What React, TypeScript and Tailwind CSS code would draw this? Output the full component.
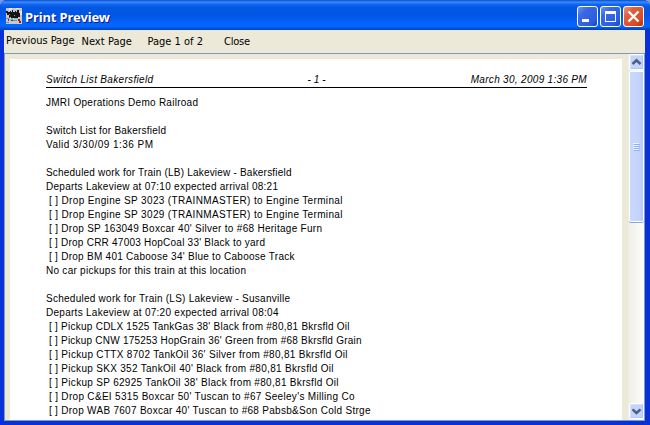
import React, { useLayoutEffect, useRef, useState } from 'react';

function FitText({ text, width, className = '' }: { text: string; width: number; className?: string }) {
  const ref = useRef<HTMLSpanElement>(null);
  const [spacing, setSpacing] = useState(0);
  useLayoutEffect(() => {
    if (ref.current) {
      const natural = ref.current.getBoundingClientRect().width;
      setSpacing((width - natural) / (text.length - 1));
    }
  }, [text, width]);
  return (
    <span ref={ref} className={`inline-block whitespace-pre ${className}`} style={{ letterSpacing: `${spacing}px` }}>
      {text}
    </span>
  );
}

const lines: [string, number][] = [
  ['JMRI Operations Demo Railroad', 152],
  ['', 0],
  ['Switch List for Bakersfield', 120],
  ['Valid 3/30/09 1:36 PM', 107],
  ['', 0],
  ['Scheduled work for Train (LB) Lakeview - Bakersfield', 245.5],
  ['Departs Lakeview at 07:10 expected arrival 08:21', 232],
  ['[ ] Drop Engine SP 3023 (TRAINMASTER) to Engine Terminal', 293.5],
  ['[ ] Drop Engine SP 3029 (TRAINMASTER) to Engine Terminal', 293.5],
  ["[ ] Drop SP 163049 Boxcar 40' Silver to #68 Heritage Furn", 273],
  ["[ ] Drop CRR 47003 HopCoal 33' Black to yard", 216],
  ["[ ] Drop BM 401 Caboose 34' Blue to Caboose Track", 245.5],
  ['No car pickups for this train at this location', 200],
  ['', 0],
  ['Scheduled work for Train (LS) Lakeview - Susanville', 244],
  ['Departs Lakeview at 07:20 expected arrival 08:04', 232.5],
  ["[ ] Pickup CDLX 1525 TankGas 38' Black from #80,81 Bkrsfld Oil", 300.5],
  ["[ ] Pickup CNW 175253 HopGrain 36' Green from #68 Bkrsfld Grain", 312.5],
  ["[ ] Pickup CTTX 8702 TankOil 36' Silver from #80,81 Bkrsfld Oil", 298.5],
  ["[ ] Pickup SKX 352 TankOil 40' Black from #80,81 Bkrsfld Oil", 284.5],
  ["[ ] Pickup SP 62925 TankOil 38' Black from #80,81 Bkrsfld Oil", 289.5],
  ["[ ] Drop C&EI 5315 Boxcar 50' Tuscan to #67 Seeley's Milling Co", 305.5],
  ["[ ] Drop WAB 7607 Boxcar 40' Tuscan to #68 Pabsb&Son Cold Strge", 321.5],
];

function TrainIcon() {
  return (
    <svg width="16" height="16" viewBox="0 0 16 16" shapeRendering="crispEdges">
      <path fill="#c9c9c9" d="M0 0h16v16H0z" />
      <path fill="#e6e6e6" d="M3 0h3v2H3zM10 0h3v1h-3zM14 3h2v4h-2z" />
      <path fill="#151515" d="M0 3h2v1h2V3h1v1h1V2h1v2h2V3h1v1h1V2h2v3h1v4h-2v1H5V9H3V7H1V5H0z" />
      <path fill="#8d8d8d" d="M3 6h1v1H3zM8 7h1v1H8zM0 10h3v1H0zM7 12h4v1H7zM0 14h3v1H0z" />
      <path fill="#65bccb" d="M5 10h2v1H5zM8 10h4v1H8zM4 11h3v1H4z" />
      <path fill="#444" d="M2 11h1v2H2zM5 12h2v1H5zM3 9h1v1H3z" />
      <path fill="#a5161c" d="M12 11h2v2h1v2h-2v-2h-1z" />
    </svg>
  );
}

function TitleButton({ kind }: { kind: 'min' | 'max' | 'close' }) {
  return (
    <svg width="21" height="21" viewBox="0 0 21 21">
      <defs>
        <linearGradient id={`title-${kind}`} x1="0" y1="0" x2="1" y2="1">
          <stop offset="0" stopColor={kind === 'close' ? '#ee9880' : '#7597f0'} />
          <stop offset=".3" stopColor={kind === 'close' ? '#e2603c' : '#3b68e4'} />
          <stop offset=".75" stopColor={kind === 'close' ? '#dc4a20' : '#2a5ee3'} />
          <stop offset="1" stopColor={kind === 'close' ? '#a92c0c' : '#1442b8'} />
        </linearGradient>
      </defs>
      <rect x=".5" y=".5" width="20" height="20" rx="2.5" fill={`url(#title-${kind})`} stroke="#fff" />
      {kind === 'min' && <path fill="#fff" d="M5 13h7v3H5z" />}
      {kind === 'max' && <path fill="#fff" fillRule="evenodd" d="M5 5h11v11H5zM6 8v7h9V8z" />}
      {kind === 'close' && <path fill="none" stroke="#fff" strokeWidth="2.4" d="M5.5 5.5l10 10M15.5 5.5l-10 10" />}
    </svg>
  );
}

function ArrowButton({ down = false }: { down?: boolean }) {
  return (
    <svg className="shrink-0" width="15" height="17" viewBox="0 0 15 17">
      <rect x=".5" y=".5" width="14" height="15" rx="1.5" fill="#c5d4fc" stroke="#fff" />
      <path d="M1.5 15V1.5H13" fill="none" stroke="#d6e1ff" />
      <path d="M1.5 14.5h12v-13" fill="none" stroke="#b0c4f5" />
      <path
        fill="none"
        stroke="#4d6185"
        strokeWidth="2.5"
        d={down ? 'M3.5 6.3L7.5 10l4-3.7' : 'M3.5 10L7.5 6.3l4 3.7'}
      />
    </svg>
  );
}

export default function App() {
  return (
    <div className="h-[425px] w-[650px] overflow-hidden bg-[#7a98e0]">
      <div className="flex h-full flex-col overflow-hidden rounded-t-[7px] bg-[#0831d9]">
        <header className="flex h-[30px] shrink-0 items-center bg-[linear-gradient(180deg,#0a4ad0_0%,#3c8cff_7%,#1268f2_14%,#0357e4_25%,#0055e5_50%,#0363fb_75%,#0267ff_88%,#0052dc_94%,#0040bf_100%)] pr-[6px] pl-[6px] pt-[2px]">
          <TrainIcon />
          <h1 className="ml-[3px] text-[#fff] [font-family:'Noto_Sans','DejaVu_Sans',sans-serif] [text-shadow:1px_1px_0_#0a1883]">
            <FitText text="Print Preview" width={85} className="text-[13px] leading-5 font-bold" />
          </h1>
          <div className="ml-auto flex gap-[2px] pt-[1px]">
            <TitleButton kind="min" />
            <TitleButton kind="max" />
            <TitleButton kind="close" />
          </div>
        </header>
        <div className="flex min-h-0 flex-1 flex-col border-r-[5px] border-b-4 border-l-4 border-t-0 border-[#0831d9] bg-[#ece9d8]">
          <nav className="flex h-[23px] shrink-0 items-start pl-[2px] text-[11px] leading-[15px] text-black [font-family:'DejaVu_Sans_Condensed','DejaVu_Sans',sans-serif]">
            <FitText text="Previous Page" width={68.5} className="mt-[3px]" />
            <FitText text="Next Page" width={50.5} className="mt-[4px] ml-[7px]" />
            <FitText text="Page 1 of 2" width={55.5} className="mt-[4px] ml-[15.5px]" />
            <FitText text="Close" width={26} className="mt-[4px] ml-[21px]" />
          </nav>
          <div className="flex min-h-0 flex-1 border border-r-0 border-[#7f9db9]">
            <div className="min-w-0 flex-1 overflow-hidden pt-[5px] pr-[6px] pl-[5px]">
              <main className="h-full bg-white pt-[14px] pr-[35px] pl-[36px] text-[10px] leading-[14px] text-black [font-family:'Liberation_Sans',Arial,sans-serif]">
                <div className="grid h-[15px] grid-cols-[1fr_auto_1fr] border-b border-black italic leading-[14px]">
                  <FitText text="Switch List Bakersfield" width={107} className="justify-self-start" />
                  <FitText text="- 1 -" width={18} />
                  <FitText text="March 30, 2009 1:36 PM" width={116} className="justify-self-end" />
                </div>
                <div className="pt-[8px]">
                  {lines.map(([text, width], i) => (
                    <div key={i} className={text.startsWith('[') ? 'h-[14px] pl-[3px]' : 'h-[14px]'}>
                      {text && <FitText text={text} width={width} />}
                    </div>
                  ))}
                </div>
              </main>
            </div>
            <div className="flex w-[17px] flex-col items-center border-r border-[#7f9db9] bg-[linear-gradient(90deg,#eeede5,#fefefb)]">
              <ArrowButton />
              <div className="flex h-[151px] w-[15px] shrink-0 items-center justify-center rounded-[2px] border border-white bg-[linear-gradient(90deg,#c9d8fc,#c3d3fd_70%,#b7caf5)] shadow-[0_1px_0_#8ba4d4]">
                <svg width="7" height="8" viewBox="0 0 7 8" shapeRendering="crispEdges">
                  <path fill="#eef4fe" d="M0 0h6v1H0zM0 2h6v1H0zM0 4h6v1H0zM0 6h6v1H0z" />
                  <path fill="#8cb0f8" d="M1 1h6v1H1zM1 3h6v1H1zM1 5h6v1H1zM1 7h6v1H1z" />
                </svg>
              </div>
              <div className="flex-1" />
              <ArrowButton down />
            </div>
          </div>
        </div>
      </div>
    </div>
  );
}
